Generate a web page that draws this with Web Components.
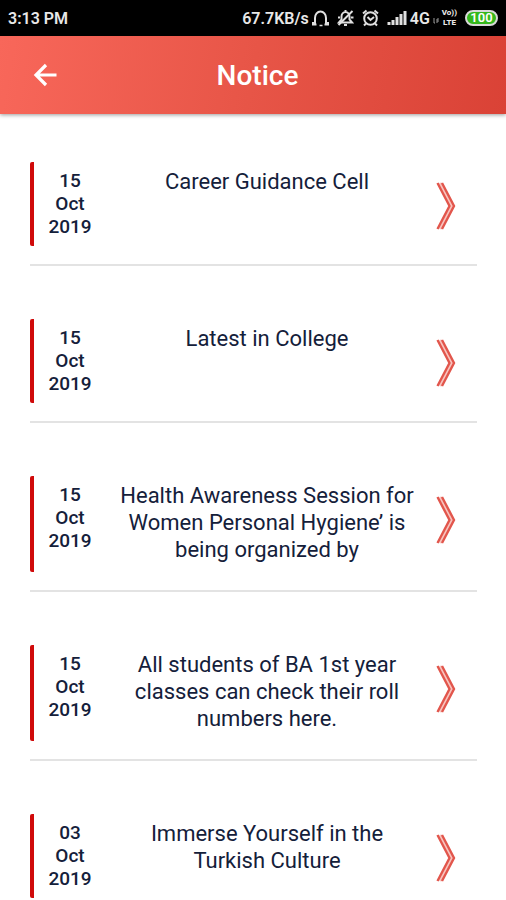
<!DOCTYPE html>
<html lang="en">
<head>
<meta charset="utf-8">
<meta name="viewport" content="width=device-width, initial-scale=1">
<title>Notice</title>
<style>
    body{
        margin: 0;
        background: #fff;
        color: #14203a;
        font-family: Roboto, sans-serif;
    }
</style>
</head>
<body>
<notice-app>
    <status-bar slot="top" time="3:13 PM" speed="67.7KB/s" battery="100"></status-bar>
    <app-header slot="top">Notice</app-header>
    <notice-item day="15" month="Oct" year="2019">Career Guidance Cell</notice-item>
    <notice-item day="15" month="Oct" year="2019">Latest in College</notice-item>
    <notice-item day="15" month="Oct" year="2019">Health Awareness Session for Women Personal Hygiene’ is being organized by</notice-item>
    <notice-item day="15" month="Oct" year="2019">All students of BA 1st year classes can check their roll numbers here.</notice-item>
    <notice-item day="03" month="Oct" year="2019">Immerse Yourself in the Turkish Culture</notice-item>
</notice-app>

<script>
class NoticeApp extends HTMLElement {
    constructor(){
        super();
        const shadow = this.attachShadow({ mode: 'open' });
        shadow.innerHTML = `
        <style>
            :host{
                display: flex;
                flex-direction: column;
                height: 100vh;
            }
            main{
                flex: 1;
                min-height: 0;
                overflow-y: auto;
                scrollbar-width: none;
                display: flex;
                flex-direction: column;
                gap: 53px;
                padding: 48px 29px 24px 30px;
            }
        </style>
        <slot name="top"></slot>
        <main><slot></slot></main>
        `;
    }
}

class StatusBar extends HTMLElement {
    constructor(){
        super();
        const shadow = this.attachShadow({ mode: 'open' });
        shadow.innerHTML = `
        <style>
            :host{
                display: flex;
                flex: none;
                align-items: center;
                justify-content: space-between;
                height: 36px;
                padding: 0 8px;
                background: #000;
                color: #e8e8e8;
                font-size: 16px;
                font-weight: 600;
            }
            .right, .network{
                display: flex;
                align-items: center;
            }
            .right{
                gap: 8px;
            }
            .network{
                gap: 3px;
            }
            svg{
                display: block;
                fill: none;
                stroke: #e0e0e0;
                stroke-width: 2;
            }
            .volte{
                display: grid;
                font-size: 8px;
                line-height: 10px;
                font-weight: 800;
                text-align: center;
            }
            .battery{
                box-sizing: border-box;
                width: 33px;
                height: 16px;
                border: 2px solid #d8d8d8;
                border-radius: 8px;
                background: #35b81c;
                color: #fff;
                font-size: 13px;
                line-height: 12px;
                text-align: center;
            }
        </style>
        <span id="time"></span>
        <div class="right">
            <div class="network">
                <span id="speed"></span>
                <svg width="17" height="18" viewBox="0 0 17 18">
                    <path d="M3 15V9a5.500 6.500 0 0 1 11 0v6"/>
                    <path d="M1 13v2.500h3.500M16 13v2.500h-3.500"/>
                    <path d="M7.500 16.500h3" stroke-width="1.500"/>
                </svg>
            </div>
            <svg width="17" height="18" viewBox="0 0 17 18">
                <path d="M2 13.500h13l-2.500-3V7.500a4 4.500 0 0 0-8 0v3zM7 16h3M8.500 1v2"/>
                <path d="M15.500 2L1.500 16"/>
                <path d="M1 8.500h2M14 8.500h2.500"/>
            </svg>
            <svg width="17" height="18" viewBox="0 0 17 18">
                <circle cx="8.500" cy="9.500" r="6.300"/>
                <path d="M1 4.500l3.500-3M16 4.500l-3.500-3M5.500 8l3 3 3.500-3M4 14.500l-2 2M13 14.500l2 2"/>
            </svg>
            <div class="network">
                <svg width="20" height="14" viewBox="0 0 20 14">
                    <path d="M2 14v-3M6 14V9M10 14V6M14 14V3M18 14V0" stroke-width="3"/>
                </svg>
                <span>4G</span>
                <svg width="6" height="12" viewBox="0 0 6 12">
                    <path d="M1 6v5h1M4 11V7h2M4 9h2" stroke="#999" stroke-width="1"/>
                </svg>
                <span class="volte"><span>Vo))</span><span>LTE</span></span>
            </div>
            <div class="battery"></div>
        </div>
        `;
    }

    connectedCallback(){
        this.shadowRoot.getElementById("time").textContent = this.getAttribute("time");
        this.shadowRoot.getElementById("speed").textContent = this.getAttribute("speed");
        this.shadowRoot.querySelector(".battery").textContent = this.getAttribute("battery");
    }
}

class AppHeader extends HTMLElement {
    constructor(){
        super();
        const shadow = this.attachShadow({ mode: 'open' });
        shadow.innerHTML = `
        <style>
            :host{
                display: grid;
                flex: none;
                grid-template-columns: 48px 1fr 48px;
                align-items: center;
                height: 78px;
                padding: 0 12px 0 21px;
                background: linear-gradient(100deg, #f8675a, #e75547 50%, #da4236);
                box-shadow: 0 1px 4px rgba(0, 0, 0, 0.4);
                color: #fff;
            }
            button{
                display: grid;
                place-items: center;
                width: 48px;
                height: 48px;
                padding: 0;
                border: 0;
                background: none;
                color: inherit;
            }
            h1{
                margin: 0;
                font-size: 28px;
                font-weight: 500;
                text-align: center;
            }
        </style>
        <button type="button" aria-label="Back">
            <svg width="24" height="24" viewBox="0 0 24 24" fill="none" stroke="currentColor" stroke-width="3.200">
                <path d="M23.500 12H3M13 2L3 12 13 22"/>
            </svg>
        </button>
        <h1><slot></slot></h1>
        `;

        shadow.querySelector("button").addEventListener("click", () => history.back());
    }
}

class NoticeItem extends HTMLElement {
    constructor(){
        super();
        const shadow = this.attachShadow({ mode: 'open' });
        shadow.innerHTML = `
        <style>
            :host{
                display: block;
                padding-bottom: 18px;
                border-bottom: 2px solid #e3e3e3;
            }
            article{
                display: grid;
                grid-template-columns: 72px 1fr 49px;
                border-left: 4px solid #d00a0a;
                border-radius: 2px;
            }
            time{
                display: grid;
                align-content: start;
                padding: 7px 0 8px;
                font-size: 19px;
                font-weight: 500;
                line-height: 23px;
                text-align: center;
            }
            h2{
                margin: 0;
                padding: 6px 8px 9px;
                font-size: 22px;
                font-weight: 400;
                line-height: 27px;
                text-align: center;
            }
            a{
                align-self: start;
                padding: 20px 0 0 8px;
                color: #e2564c;
            }
            svg{
                display: block;
            }
        </style>
        <article>
            <time><span id="day"></span><span id="month"></span><span id="year"></span></time>
            <h2><slot></slot></h2>
            <a href="#" aria-label="Open notice">
                <svg width="20" height="48" viewBox="0 0 20 48" fill="none" stroke="currentColor" stroke-width="2.400">
                    <path d="M4 1L16 24 4 47" stroke="#f8c4bf" stroke-width="3"/>
                    <path d="M1.500 1L13.500 24 1.500 47M6 1L18 24 6 47"/>
                </svg>
            </a>
        </article>
        `;
    }

    connectedCallback(){
        for (const part of ["day", "month", "year"]) {
            this.shadowRoot.getElementById(part).textContent = this.getAttribute(part);
        }
    }
}

customElements.define("notice-app", NoticeApp);
customElements.define("status-bar", StatusBar);
customElements.define("app-header", AppHeader);
customElements.define("notice-item", NoticeItem);
</script>
</body>
</html>
